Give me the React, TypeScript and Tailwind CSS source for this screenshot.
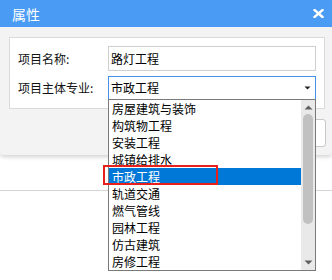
import React from "react";

const items = [
  "房屋建筑与装饰",
  "构筑物工程",
  "安装工程",
  "城镇给排水",
  "市政工程",
  "轨道交通",
  "燃气管线",
  "园林工程",
  "仿古建筑",
  "房修工程",
];

export default function App() {
  return (
    <div className="relative w-[332px] h-[280px] bg-white overflow-hidden font-['Microsoft_YaHei','Noto_Sans_CJK_SC',sans-serif] text-[12px] text-black">
      <div className="h-[155px] bg-[#f3f3f3] rounded-b-[4px] shadow-[0_2px_4px_rgba(0,0,0,0.18)] flex flex-col">
        <div className="h-[27px] bg-[#4a9bf4] flex items-center justify-between pl-[12px] pr-[7px] text-white text-[14px] leading-none">
          <span>属性</span>
          <svg width="11" height="9" viewBox="0 0 11 9" className="mr-[1px]">
            <path d="M1.5 1 L9.5 8 M9.5 1 L1.5 8" stroke="white" strokeWidth="2.4" strokeLinecap="square" />
          </svg>
        </div>
        <div className="pt-[10px] pl-[9px] pr-[7px] flex flex-col">
          <div className="h-[72px] bg-white border border-[#dadada] px-[8px] pt-[8px] flex flex-col gap-[5px]">
            <div className="flex items-center">
              <div className="w-[90px] leading-[16px] text-[#111]">项目名称:</div>
              <div className="w-[208px] h-[25px] border border-[#cfcfcf] flex items-center pl-[2px] leading-[16px]">路灯工程</div>
            </div>
            <div className="flex items-center">
              <div className="w-[90px] leading-[16px] text-[#111]">项目主体专业:</div>
              <div className="w-[208px] h-[24px] border border-[#4a90e2] flex items-center justify-between pl-[2px] pr-[4px] leading-[16px]">
                <span>市政工程</span>
                <svg width="7" height="4" viewBox="0 0 7 4">
                  <path d="M0.5 0.5 L6.5 0.5 L3.5 3.5 Z" fill="#222" />
                </svg>
              </div>
            </div>
          </div>
          <div className="flex justify-end mt-[10px] -mr-[1px]">
            <div className="w-[64px] h-[28px] bg-white border border-[#c8c8c8] rounded-[3px]" />
          </div>
        </div>
      </div>
      <div className="mt-[35px] h-px bg-[#d4d4d4]" />

      <div className="absolute left-[108px] top-[99px] w-[208px] h-[172px] bg-white border border-[#7a7a7a] flex">
        <div className="flex-1 flex flex-col">
          {items.map((it) => (
            <div
              key={it}
              className={
                it === "市政工程"
                  ? "h-[17px] flex items-center pl-[3px] leading-[16px] bg-[#0078d7] text-white"
                  : "h-[17px] flex items-center pl-[3px] leading-[16px]"
              }
            >
              {it}
            </div>
          ))}
        </div>
        <div className="w-[14px] bg-[#e9e9e9] flex flex-col items-center">
          <svg width="9" height="5" viewBox="0 0 9 5" className="mt-[5px]">
            <path d="M0.5 4.5 L4.5 0.5 L8.5 4.5 Z" fill="#606060" />
          </svg>
          <div className="mt-[4px] w-[10px] h-[110px] rounded-full bg-[#c1c1c1]" />
          <div className="flex-1" />
          <svg width="9" height="5" viewBox="0 0 9 5" className="mb-[5px]">
            <path d="M0.5 0.5 L8.5 0.5 L4.5 4.5 Z" fill="#606060" />
          </svg>
        </div>
      </div>

      <div className="absolute left-[103px] top-[165px] w-[115px] h-[20px] border-2 border-[#e8201c]" />
    </div>
  );
}
